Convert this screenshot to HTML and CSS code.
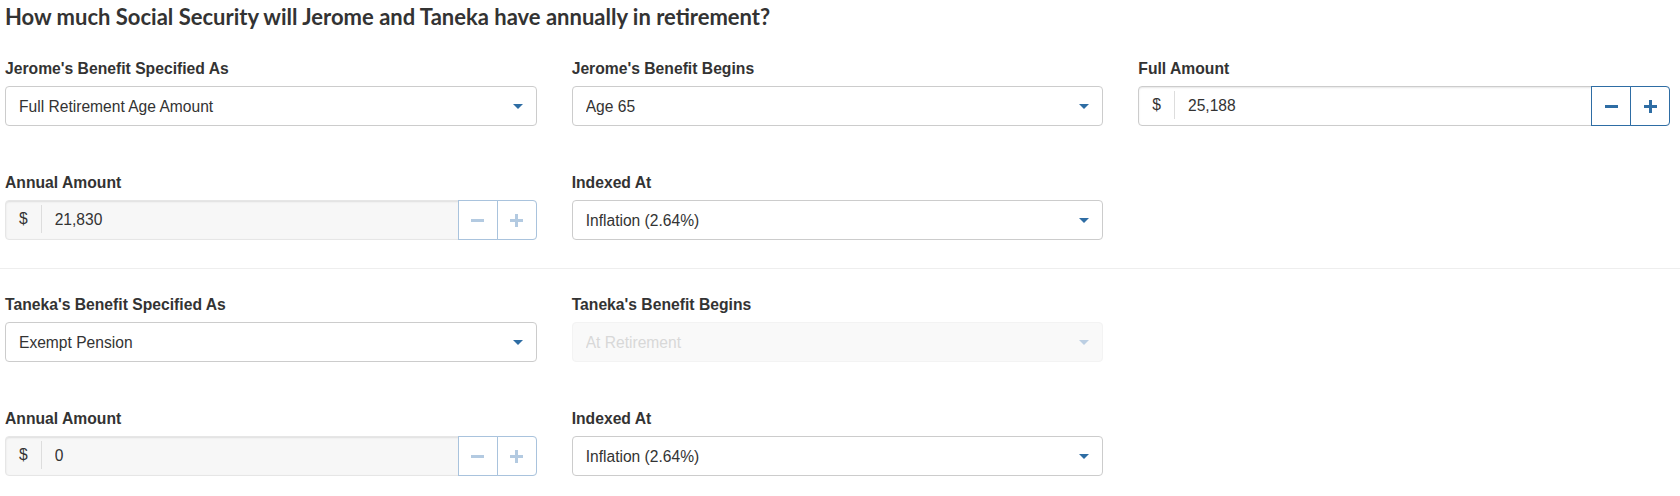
FILE: index.html
```html
<!DOCTYPE html>
<html lang="en">
<head>
    <meta charset="UTF-8">
    <meta name="viewport" content="width=device-width, initial-scale=1.0">
    <title>Social Security</title>
    <link rel="stylesheet" href="styles.css">
</head>
<body>
    <h2 class="question">How much Social Security will Jerome and Taneka have annually in retirement?</h2>

    <!-- Jerome -->
    <div class="person">
        <div class="form-row">
            <div class="field">
                <label>Jerome's Benefit Specified As</label>
                <div class="select-wrap">
                    <select class="form-control">
                        <option>Full Retirement Age Amount</option>
                    </select>
                </div>
            </div>
            <div class="field">
                <label>Jerome's Benefit Begins</label>
                <div class="select-wrap">
                    <select class="form-control">
                        <option>Age 65</option>
                    </select>
                </div>
            </div>
            <div class="field">
                <label>Full Amount</label>
                <div class="input-group">
                    <span class="addon">$</span>
                    <input type="text" class="amount" value="25,188">
                    <button class="step">
                        <svg width="13" height="13" viewBox="0 0 13 13"><rect x="0" y="5" width="13" height="3" fill="currentColor"/></svg>
                    </button>
                    <button class="step last">
                        <svg width="13" height="13" viewBox="0 0 13 13"><rect x="0" y="5" width="13" height="3" fill="currentColor"/><rect x="5" y="0" width="3" height="13" fill="currentColor"/></svg>
                    </button>
                </div>
            </div>
        </div>
        <div class="form-row">
            <div class="field">
                <label>Annual Amount</label>
                <div class="input-group disabled">
                    <span class="addon">$</span>
                    <input type="text" class="amount" value="21,830" readonly>
                    <button class="step" disabled>
                        <svg width="13" height="13" viewBox="0 0 13 13"><rect x="0" y="5" width="13" height="3" fill="currentColor"/></svg>
                    </button>
                    <button class="step last" disabled>
                        <svg width="13" height="13" viewBox="0 0 13 13"><rect x="0" y="5" width="13" height="3" fill="currentColor"/><rect x="5" y="0" width="3" height="13" fill="currentColor"/></svg>
                    </button>
                </div>
            </div>
            <div class="field">
                <label>Indexed At</label>
                <div class="select-wrap">
                    <select class="form-control">
                        <option>Inflation (2.64%)</option>
                    </select>
                </div>
            </div>
        </div>
    </div>

    <hr class="divider">

    <!-- Taneka -->
    <div class="person second">
        <div class="form-row">
            <div class="field">
                <label>Taneka's Benefit Specified As</label>
                <div class="select-wrap">
                    <select class="form-control">
                        <option>Exempt Pension</option>
                    </select>
                </div>
            </div>
            <div class="field">
                <label>Taneka's Benefit Begins</label>
                <div class="select-wrap disabled">
                    <select class="form-control" disabled>
                        <option>At Retirement</option>
                    </select>
                </div>
            </div>
        </div>
        <div class="form-row">
            <div class="field">
                <label>Annual Amount</label>
                <div class="input-group disabled">
                    <span class="addon">$</span>
                    <input type="text" class="amount" value="0" readonly>
                    <button class="step" disabled>
                        <svg width="13" height="13" viewBox="0 0 13 13"><rect x="0" y="5" width="13" height="3" fill="currentColor"/></svg>
                    </button>
                    <button class="step last" disabled>
                        <svg width="13" height="13" viewBox="0 0 13 13"><rect x="0" y="5" width="13" height="3" fill="currentColor"/><rect x="5" y="0" width="3" height="13" fill="currentColor"/></svg>
                    </button>
                </div>
            </div>
            <div class="field">
                <label>Indexed At</label>
                <div class="select-wrap">
                    <select class="form-control">
                        <option>Inflation (2.64%)</option>
                    </select>
                </div>
            </div>
        </div>
    </div>
</body>
</html>
```
FILE: styles.css
```css
body {
    font-family: 'Liberation Sans', Arial, sans-serif;
    font-size: 15.6px;
    color: #333;
    margin: 0;
    padding: 0;
    background: white;
}
.question {
    font-family: Lato, 'Open Sans', sans-serif;
    font-size: 22px;
    font-weight: 700;
    line-height: 30px;
    color: #333;
    margin: 0;
    padding: 2px 0 0 5px;
}
.person {
    padding: 28px 10px 0 5px;
    display: flex;
    flex-direction: column;
    gap: 48px;
}
.person.second {
    padding-top: 27px;
}
.form-row {
    display: grid;
    grid-template-columns: repeat(3, 1fr);
    column-gap: 35px;
}
.field label {
    display: block;
    font-size: 15.7px;
    font-weight: bold;
    line-height: 18px;
    margin-bottom: 8px;
    color: #333;
}
.form-control {
    width: 100%;
    height: 40px;
    padding: 0 13px;
    font-family: inherit;
    font-size: 15.6px;
    color: #333;
    background: white;
    border: 1px solid #ccc;
    border-radius: 4px;
    box-sizing: border-box;
    appearance: none;
    -webkit-appearance: none;
    outline: none;
}
.select-wrap {
    position: relative;
}
.select-wrap::after {
    content: '';
    position: absolute;
    right: 14px;
    top: 18px;
    border-left: 5px solid transparent;
    border-right: 5px solid transparent;
    border-top: 5px solid #2e6da4;
    pointer-events: none;
}
.select-wrap.disabled .form-control {
    background: #f7f7f7;
    border-color: #eee;
    color: #c8c8c8;
}
.select-wrap.disabled::after {
    border-top-color: #bccfe3;
}
.input-group {
    display: flex;
    align-items: stretch;
    height: 40px;
    border: 1px solid #ccc;
    border-radius: 4px;
    box-sizing: border-box;
    background: white;
    box-shadow: inset 0 1px 2px rgba(0, 0, 0, 0.1);
}
.input-group .addon {
    display: flex;
    align-items: center;
    padding: 0 13px 0 13px;
    margin: 4px 0 6px;
    border-right: 1px solid #ddd;
}
.input-group .amount {
    flex: 1;
    min-width: 0;
    border: none;
    background: transparent;
    font-family: inherit;
    font-size: 15.6px;
    color: #333;
    padding: 0 13px;
    outline: none;
}
.step {
    width: 40px;
    margin: -1px 0 -1px -1px;
    padding: 0;
    display: flex;
    align-items: center;
    justify-content: center;
    background: white;
    border: 1px solid #2e6da4;
    color: #2e6da4;
    cursor: pointer;
}
.step.last {
    margin-right: -1px;
    border-radius: 0 4px 4px 0;
}
.input-group.disabled {
    background: #f7f7f7;
    border-color: #e6e6e6;
}
.input-group.disabled .step {
    border-color: #a9c3dd;
    color: #b3cae1;
    cursor: default;
}
.divider {
    border: none;
    border-top: 1px solid #eee;
    margin: 28px 0 0;
}
```
